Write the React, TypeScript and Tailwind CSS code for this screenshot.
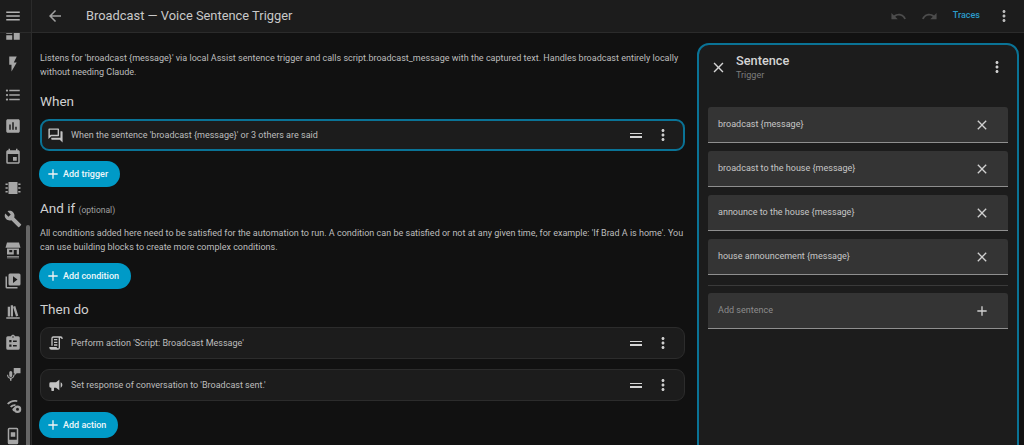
import { MdAdd, MdArrowBack, MdBuild, MdClose, MdEvent, MdFlashOn, MdFormatListBulleted, MdInsertChart, MdMenu, MdMoreVert, MdOutlineForum, MdRedo, MdUndo } from 'react-icons/md'

type IconProps = { size?: number; className?: string }

function Mdi({ d, size = 18, className }: IconProps & { d: string }) {
  return (
    <svg viewBox="0 0 24 24" width={size} height={size} fill="currentColor" className={className}>
      <path d={d} />
    </svg>
  )
}

const SCRIPT = 'M15,20A1,1 0 0,0 16,19V4H8A1,1 0 0,0 7,5V16H5V5A3,3 0 0,1 8,2H19A3,3 0 0,1 22,5V6H20V5A1,1 0 0,0 19,4A1,1 0 0,0 18,5V9L18,19A3,3 0 0,1 15,22H5A3,3 0 0,1 2,19V18H13A2,2 0 0,0 15,20M9,6H14V8H9V6M9,10H14V12H9V10M9,14H14V16H9V14Z'
const BULLHORN = 'M12,8H4A2,2 0 0,0 2,10V14A2,2 0 0,0 4,16H5V20A1,1 0 0,0 6,21H8A1,1 0 0,0 9,20V16H12L17,20V4L12,8M21.5,12C21.5,13.71 20.54,15.26 19,16V8C20.53,8.75 21.5,10.3 21.5,12Z'
const DASHBOARD = 'M13,3V9H21V3M13,21H21V11H13M3,21H11V15H3M3,13H11V3H3V13Z'
const CHIP = 'M6,4H18V20H6V4M2,6H5V8H2V6M2,11H5V13H2V11M2,16H5V18H2V16M19,6H22V8H19V6M19,11H22V13H19V11M19,16H22V18H19V16Z'
const BOOKSHELF = 'M9 3V18H12V3H9M12 5L16 18L19 17L15 4L12 5M5 5V18H8V5H5M3 19V21H21V19H3Z'
const PLAYBOX = 'M4,6H2V20A2,2 0 0,0 4,22H18V20H4V6M20,2H8A2,2 0 0,0 6,4V16A2,2 0 0,0 8,18H20A2,2 0 0,0 22,16V4A2,2 0 0,0 20,2M12,14.5V5.5L18,10L12,14.5Z'
const CLIPBOARD = 'M19,3H14.82C14.4,1.84 13.3,1 12,1C10.7,1 9.6,1.84 9.18,3H5A2,2 0 0,0 3,5V19A2,2 0 0,0 5,21H19A2,2 0 0,0 21,19V5A2,2 0 0,0 19,3M12,3A1,1 0 0,1 13,4A1,1 0 0,1 12,5A1,1 0 0,1 11,4A1,1 0 0,1 12,3M7,8H10V11H7V8M12,8.5H17V10.5H12V8.5M7,14H10V17H7V14M12,14.5H17V16.5H12V14.5Z'
const STORE = 'M4,2H20L22,9H2L4,2M4,10H20V18H4V10M7,12V15H11V12H7M13,12V18H17V12H13M4,20H20V21H4V20M4,22H20V23H4V22Z'
const MIC_MESSAGE = 'M9,8A2,2 0 0,1 11,10V14A2,2 0 0,1 7,14V10A2,2 0 0,1 9,8M4,13H5.5C5.5,15.5 7,17 9,17C11,17 12.5,15.5 12.5,13H14C14,15.8 12.2,18 10,18.4V21H8V18.4C5.8,18 4,15.8 4,13M13,4H22V11H17L14,14V11H13V4Z'
const WIFI_COG = 'M4,10C7.5,6 13,4.5 18,6L17.4,8C13.5,6.8 9,8 6,11.4L4,10M8,14C10,11.8 12.8,10.8 15.5,11.2L15,13.2C13.2,13 11.2,13.8 9.8,15.4L8,14M11,18L12,16.4C12.8,16 13,15.8 13.6,15.8C13.4,17 13.4,18 14,19L12.6,20.6L11,18M18,12.5A5,5 0 1,1 18,22.5A5,5 0 1,1 18,12.5M18,15.5A2,2 0 1,0 18,19.5A2,2 0 1,0 18,15.5Z'
const REMOTE = 'M7,1H17A2,2 0 0,1 19,3V21A2,2 0 0,1 17,23H7A2,2 0 0,1 5,21V3A2,2 0 0,1 7,1M7,3V17H17V3H7M9,7H15V13H9V7M9,19.5L11,18V19H15V20H11V21L9,19.5Z'

const navIcons = [
  <Mdi d={DASHBOARD} />,
  <MdFlashOn size={18} />,
  <MdFormatListBulleted size={18} />,
  <MdInsertChart size={18} />,
  <MdEvent size={18} />,
  <Mdi d={CHIP} />,
  <MdBuild size={18} />,
  <Mdi d={STORE} />,
  <Mdi d={PLAYBOX} />,
  <Mdi d={BOOKSHELF} />,
  <Mdi d={CLIPBOARD} />,
  <Mdi d={MIC_MESSAGE} />,
  <Mdi d={WIFI_COG} />,
  <Mdi d={REMOTE} />,
]

function DragHandle() {
  return (
    <div className="flex flex-col gap-[2px] w-[12px]">
      <div className="h-[1.5px] bg-[#d4d4d4]" />
      <div className="h-[1.5px] bg-[#d4d4d4]" />
    </div>
  )
}

function Row({ icon, text, active }: { icon: React.ReactNode; text: string; active?: boolean }) {
  return (
    <div className={`h-[32px] flex items-center bg-[#1c1c1c] rounded-[9px] ${active ? 'border-2 border-[#0a7396] pl-[5px] pr-[13px]' : 'border border-[#2c2c2c] pl-[6px] pr-[14px]'}`}>
      <div className="w-[17px] flex justify-center text-[#c4c4c4]">{icon}</div>
      <span className="ml-[7px] pt-[1px] text-[9.03px] text-[#bdbdbd] flex-1">{text}</span>
      <DragHandle />
      <MdMoreVert size={18} className="ml-[12px] -mr-[2px] text-[#d0d0d0]" />
    </div>
  )
}

function AddButton({ label, width }: { label: string; width: string }) {
  return (
    <div className={`h-[26px] ${width} -ml-px rounded-full bg-[#009ac7] flex items-center pl-[5.5px] text-white`}>
      <MdAdd size={16} className="text-[#f2f2f2]" />
      <span className="ml-[2.5px] pt-[1px] text-[9.03px] font-medium text-[#eef7fa]">{label}</span>
    </div>
  )
}

function SentenceField({ value, placeholder }: { value: string; placeholder?: boolean }) {
  return (
    <div className="h-[36px] flex items-center justify-between bg-[#343434] rounded-t-[3px] border-b border-[#8f8f8f] pl-[10px] pr-[18px]">
      <span className={`pt-[1px] text-[9.03px] ${placeholder ? 'text-[#8c8c8c]' : 'text-[#c6c6c6]'}`}>{value}</span>
      {placeholder ? <MdAdd size={16} className="text-[#d0d0d0]" /> : <MdClose size={16} className="text-[#d0d0d0]" />}
    </div>
  )
}

export default function App() {
  return (
    <div className="relative w-[1024px] h-[445px] overflow-hidden flex flex-col bg-[#111111] font-['Roboto',sans-serif]">
      <header className="h-[33px] shrink-0 flex items-center bg-[#1c1c1c] border-b border-[#2b2b2b]">
        <div className="w-[32px] h-full flex items-center justify-center pr-[5px] border-r border-[#2b2b2b] text-[#b4b4b4]">
          <MdMenu size={18} />
        </div>
        <MdArrowBack size={18} className="ml-[14px] text-[#a0a0a0]" />
        <h1 className="ml-[22px] text-[12.87px] text-[#c9c9c9] flex-1">Broadcast — Voice Sentence Trigger</h1>
        <MdUndo size={17} className="text-[#4c4c4c]" />
        <MdRedo size={17} className="ml-[14px] text-[#4c4c4c]" />
        <span className="ml-[15px] text-[9.03px] font-medium text-[#2b9bcb]">Traces</span>
        <MdMoreVert size={18} className="ml-[15px] mr-[11px] text-[#bcbcbc]" />
      </header>

      <div className="flex-1 flex min-h-0">
        <nav className="w-[32px] shrink-0 bg-[#1c1c1c] border-r border-[#2b2b2b] overflow-hidden">
          <div className="-mt-[16px] pr-[5px] text-[#a6a6a6]">
            {navIcons.map((icon, i) => (
              <div key={i} className="h-[31px] flex items-center justify-center">{icon}</div>
            ))}
          </div>
        </nav>

        <main className="w-[665px] shrink-0 pl-[8px] pr-[12px] pt-[18px]">
          <p className="text-[9.03px] leading-[14px] text-[#bdbdbd]">
            Listens for 'broadcast {'{message}'}' via local Assist sentence trigger and calls script.broadcast_message with the captured text. Handles broadcast entirely locally without needing Claude.
          </p>
          <h2 className="mt-[12px] text-[13.5px] leading-[20px] text-[#d0d0d0]">When</h2>
          <div className="mt-[8px]">
            <Row icon={<MdOutlineForum size={17} />} text="When the sentence 'broadcast {message}' or 3 others are said" active />
          </div>
          <div className="mt-[10px]">
            <AddButton label="Add trigger" width="w-[81px]" />
          </div>
          <h2 className="mt-[11px] text-[13.5px] leading-[20px] text-[#d0d0d0]">
            And if <span className="text-[8.5px] text-[#a0a0a0]">(optional)</span>
          </h2>
          <p className="mt-[6px] text-[9.03px] leading-[14px] text-[#bdbdbd]">
            All conditions added here need to be satisfied for the automation to run. A condition can be satisfied or not at any given time, for example: 'If Brad A is home'. You can use building blocks to create more complex conditions.
          </p>
          <div className="mt-[9px]">
            <AddButton label="Add condition" width="w-[92px]" />
          </div>
          <h2 className="mt-[10px] text-[13.5px] leading-[20px] text-[#d0d0d0]">Then do</h2>
          <div className="mt-[8px]">
            <Row icon={<Mdi d={SCRIPT} size={16} />} text="Perform action 'Script: Broadcast Message'" />
          </div>
          <div className="mt-[10px]">
            <Row icon={<Mdi d={BULLHORN} size={16} />} text="Set response of conversation to 'Broadcast sent.'" />
          </div>
          <div className="mt-[11px]">
            <AddButton label="Add action" width="w-[79px]" />
          </div>
        </main>

        <aside className="w-[322px] h-[440px] shrink-0 mt-[10px] bg-[#1c1c1c] border-2 border-[#0a7396] rounded-t-[12px] px-[9px] pt-[7px]">
          <div className="h-[30px] flex items-center">
            <MdClose size={17} className="ml-[2px] text-[#d4d4d4]" />
            <div className="ml-[9px] flex-1">
              <div className="text-[12.75px] leading-[17px] font-medium text-[#d4d4d4]">Sentence</div>
              <div className="text-[9.03px] leading-[13px] text-[#7d7d7d]">Trigger</div>
            </div>
            <MdMoreVert size={18} className="mr-[2px] text-[#d0d0d0]" />
          </div>
          <div className="mt-[25px] flex flex-col gap-[8px]">
            <SentenceField value="broadcast {message}" />
            <SentenceField value="broadcast to the house {message}" />
            <SentenceField value="announce to the house {message}" />
            <SentenceField value="house announcement {message}" />
          </div>
          <div className="mt-[10px] mb-[7px] h-px bg-[#3a3a3a]" />
          <SentenceField value="Add sentence" placeholder />
        </aside>
      </div>

      {/* sidebar scrollbar */}
      <div className="absolute left-[26px] top-[225px] bottom-0 w-[4px] rounded-t-full bg-[#666666]" />
    </div>
  )
}
